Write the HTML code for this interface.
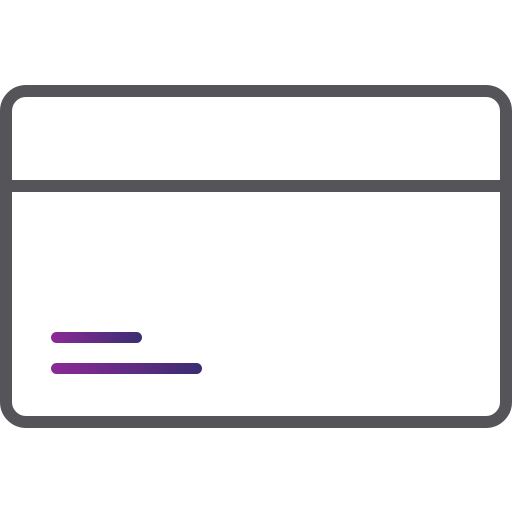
<!DOCTYPE html>
<html><head><style>html,body{margin:0;padding:0;background:#fff}</style></head>
<body>
<svg width="512" height="512" viewBox="0 0 512 512" xmlns="http://www.w3.org/2000/svg">
<defs><linearGradient id="g" x1="0" x2="1" y1="0" y2="0"><stop offset="0" stop-color="#8b2a95"/><stop offset="1" stop-color="#3a2d72"/></linearGradient></defs>
<rect x="6" y="91" width="500" height="331" rx="20" fill="none" stroke="#555559" stroke-width="12"/>
<rect x="4" y="180" width="504" height="12" fill="#555559"/>
<rect x="51" y="332" width="91" height="11" rx="5.5" fill="url(#g)"/>
<rect x="51" y="363" width="151" height="11" rx="5.5" fill="url(#g)"/>
</svg>
</body></html>
